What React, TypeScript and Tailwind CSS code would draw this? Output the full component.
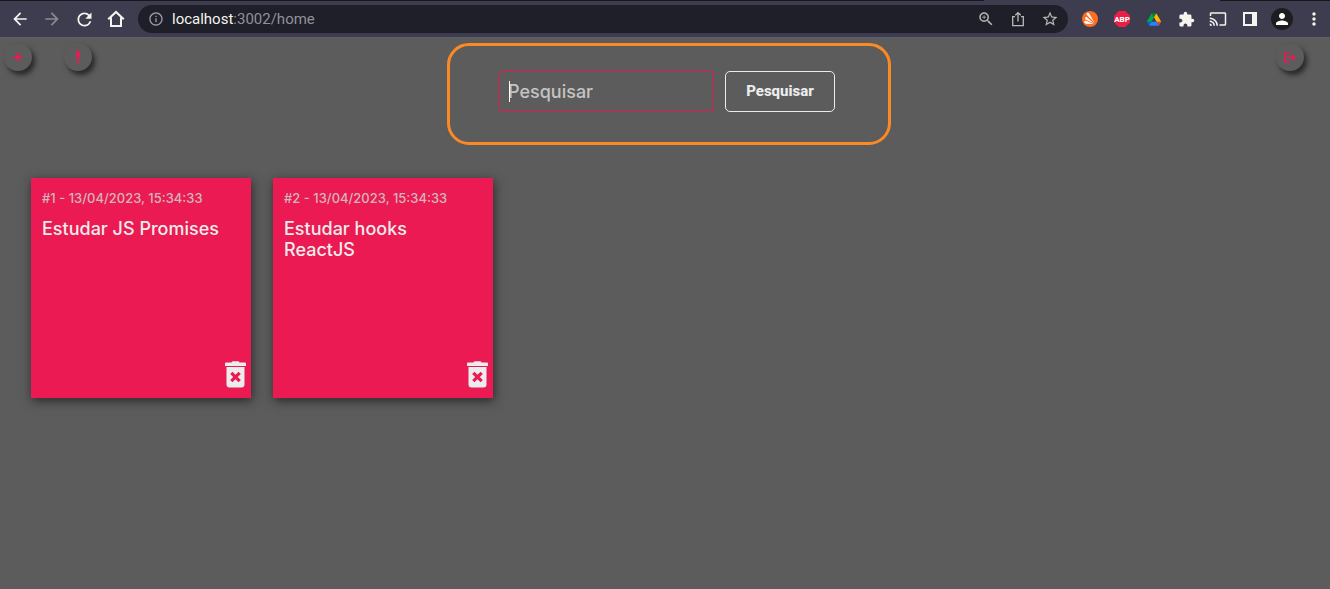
import type { ReactNode } from "react";
import { MdArrowBack, MdArrowForward, MdRefresh, MdInfoOutline, MdZoomIn, MdStarBorder, MdExtension, MdCast, MdPerson, MdMoreVert } from "react-icons/md";

function HomeIcon() {
  return (
    <svg width="18" height="18" viewBox="0 0 18 18" fill="none" stroke="currentColor" strokeWidth="2">
      <path d="M1.2 9.3 9 1.9l7.8 7.4M4 7.5V16h10V7.5" />
    </svg>
  );
}

function ShareIcon() {
  return (
    <svg width="16" height="16" viewBox="0 0 16 16" fill="none" stroke="currentColor" strokeWidth="1.3">
      <path d="M5 5.7H2.7v9h10.600v-9H11M8 10.500V2M5.300 4.300 8 1.600l2.700 2.700" />
    </svg>
  );
}

function AvastIcon() {
  return (
    <svg width="16" height="16" viewBox="0 0 16 16">
      <circle cx="8" cy="8" r="8" fill="#ff6d1f" />
      <path d="M5 2.200c.8-.7 1.900-.3 2.300.6l5.400 9.200-7.700-7.900c-.5-.5-.5-1.400 0-1.900z" fill="#fff" />
      <path d="M3.200 6.600c.5-.7 1.400-.7 2-.2l6.600 6-7.800-3.700c-.9-.4-1.200-1.400-.8-2.100z" fill="#fff" />
      <path d="M2.200 10.800c.2-.9 1.100-1.200 1.900-1l7.200 3.300-7.300-.4c-1 0-1.900-.9-1.800-1.900z" fill="#fff" />
    </svg>
  );
}

function AbpIcon() {
  return (
    <svg width="16" height="16" viewBox="0 0 16 16">
      <path d="M4.700 0h6.600L16 4.700v6.600L11.300 16H4.700L0 11.300V4.700z" fill="#ed1e45" />
      <text x="8" y="10.800" textAnchor="middle" fontSize="8" fontWeight="800" fill="#fff" fontFamily="Roboto, sans-serif">ABP</text>
    </svg>
  );
}

function DriveIcon() {
  return (
    <svg width="14" height="13" viewBox="0 0 87.300 78">
      <path d="m6.600 66.850 3.850 6.650c.8 1.400 1.950 2.500 3.300 3.300l13.750-23.800h-27.500c0 1.550.4 3.100 1.200 4.500z" fill="#0066da" />
      <path d="m43.650 25-13.750-23.800c-1.350.8-2.500 1.900-3.300 3.300l-25.400 44a9.060 9.060 0 0 0-1.200 4.500h27.500z" fill="#00ac47" />
      <path d="m73.550 76.800c1.350-.8 2.500-1.900 3.300-3.300l1.600-2.750 7.650-13.250c.8-1.400 1.200-2.950 1.200-4.500h-27.500l5.850 11.500z" fill="#ea4335" />
      <path d="m43.650 25 13.750-23.800c-1.350-.8-2.900-1.200-4.500-1.200h-18.500c-1.600 0-3.150.45-4.500 1.200z" fill="#00832d" />
      <path d="m59.800 53h-32.300l-13.750 23.800c1.350.8 2.900 1.200 4.500 1.200h50.800c1.600 0 3.150-.45 4.500-1.200z" fill="#2684fc" />
      <path d="m73.400 26.500-12.700-22c-.8-1.400-1.950-2.500-3.300-3.300l-13.750 23.800 16.150 28h27.450c0-1.550-.4-3.100-1.200-4.500z" fill="#ffba00" />
    </svg>
  );
}

function SidePanelIcon() {
  return (
    <svg width="14" height="14" viewBox="0 0 14 14" fill="currentColor">
      <path fillRule="evenodd" d="M0 0h14v14H0zM2 2v10h7V2z" />
    </svg>
  );
}

function LogoutIcon() {
  return (
    <svg width="12" height="11" viewBox="0 0 12 11" fill="none" stroke="currentColor" strokeWidth="1.500">
      <path d="M5.500 1H1v9h4.500M3.500 5.500h7.200M8 2.800l2.700 2.700L8 8.200" />
    </svg>
  );
}

function TrashIcon() {
  return (
    <svg width="21" height="27" viewBox="0 0 21 27" fill="#ececec">
      <path d="M1 1.500h5.500Q7 .3 8 .3h5q1 0 1.500 1.200H20q1 0 1 1V5H0V2.500q0-1 1-1zM1.500 6h18v17.500q0 3-3 3h-12q-3 0-3-3z" />
      <path d="m6.300 11.800 8.400 8.400m0-8.400-8.400 8.400" stroke="#eb1a52" strokeWidth="3.200" />
    </svg>
  );
}

function ToolButton({ label, children, className = "" }: { label: string; children: ReactNode; className?: string }) {
  return (
    <button type="button" aria-label={label} className={`flex size-8 shrink-0 items-center justify-center ${className}`}>
      {children}
    </button>
  );
}

function BrowserBar() {
  return (
    <header className="bg-[#3e3d4f]">
      <div className="flex h-px justify-between">
        <div className="w-[74%] bg-[#17171d]" />
        <div className="w-[110px] bg-[#17171d]" />
      </div>
      <div className="flex h-[37px] items-center border-b border-[#5f5e70] pl-1 text-[#f5f4ee]">
        <ToolButton label="Voltar"><MdArrowBack size={20} /></ToolButton>
        <ToolButton label="Avançar" className="text-[#8b8a93]"><MdArrowForward size={20} /></ToolButton>
        <ToolButton label="Recarregar"><MdRefresh size={21} /></ToolButton>
        <ToolButton label="Início"><HomeIcon /></ToolButton>
        <div className="mx-1.5 flex h-7 grow items-center rounded-full bg-[#1f1f29] text-[#b9b9b9]">
          <MdInfoOutline size={16} className="ml-2.5 text-[#9a9ba3]" />
          <p className="ml-2 grow font-['Roboto',sans-serif] text-[15px] leading-5 text-[#919197]">
            <span className="text-[#f5f4ee]">localhost</span>:3002/home
          </p>
          <ToolButton label="Zoom"><MdZoomIn size={18} /></ToolButton>
          <ToolButton label="Compartilhar"><ShareIcon /></ToolButton>
          <ToolButton label="Favoritar" className="mr-0.5"><MdStarBorder size={18} /></ToolButton>
        </div>
        <ToolButton label="Avast"><AvastIcon /></ToolButton>
        <ToolButton label="Adblock Plus"><AbpIcon /></ToolButton>
        <ToolButton label="Google Drive"><DriveIcon /></ToolButton>
        <ToolButton label="Extensões"><MdExtension size={17} /></ToolButton>
        <ToolButton label="Transmitir"><MdCast size={18} /></ToolButton>
        <ToolButton label="Painel lateral"><SidePanelIcon /></ToolButton>
        <ToolButton label="Perfil">
          <span className="flex size-[22px] items-center justify-center rounded-full bg-[#1d1d20] text-white"><MdPerson size={18} /></span>
        </ToolButton>
        <ToolButton label="Menu"><MdMoreVert size={20} /></ToolButton>
      </div>
    </header>
  );
}

function RoundButton({ label, children }: { label: string; children: ReactNode }) {
  return (
    <button
      type="button"
      aria-label={label}
      className="flex size-7 items-center justify-center rounded-full bg-[#5c5c5c] text-[#eb1a52] shadow-[3px_4px_5px_#292929]"
    >
      {children}
    </button>
  );
}

function SearchForm() {
  return (
    <form
      onSubmit={(e) => e.preventDefault()}
      className="ml-1 flex gap-[11px] rounded-[22px] border-[3px] border-[#fc8a24] pt-[25px] pr-[53px] pb-[30px] pl-[49px]"
    >
      <div className="relative">
        <input
          aria-label="Pesquisar"
          placeholder="Pesquisar"
          className="block h-[41px] w-[215px] rounded-[3px] border border-[#dc1f50] bg-transparent px-2 text-lg font-medium text-[#ececec] outline-none placeholder:text-[#c4c4c4]"
        />
        <span className="absolute top-2.5 left-2.5 h-[21px] w-px bg-white" />
      </div>
      <button type="submit" className="h-[41px] w-[110px] rounded-[5px] border border-[#ececec] font-['Roboto',sans-serif] text-[15px] font-extrabold text-[#ececec]">
        Pesquisar
      </button>
    </form>
  );
}

const notes = [
  { id: 1, date: "13/04/2023, 15:34:33", text: "Estudar JS Promises" },
  { id: 2, date: "13/04/2023, 15:34:33", text: "Estudar hooks ReactJS" },
];

function NoteCard({ id, date, text }: { id: number; date: string; text: string }) {
  return (
    <article className="flex size-[220px] flex-col bg-[#eb1a52] pt-2.5 pr-[5px] pb-2.5 pl-[11px] shadow-[1px_3px_10px_#292929]">
      <p className="text-[13px] leading-5 font-medium text-[#d3b6bd]">#{id} - {date}</p>
      <h2 className="mt-2.5 pr-4 text-lg leading-[21px] font-medium text-[#ececec]">{text}</h2>
      <button type="button" aria-label="Excluir" className="mt-auto self-end"><TrashIcon /></button>
    </article>
  );
}

export default function App() {
  return (
    <div className="flex min-h-screen flex-col bg-[#5c5c5c] font-['Inter',sans-serif]">
      <BrowserBar />
      <main className="grow">
        <div className="grid grid-cols-[1fr_auto_1fr] items-start pt-[5px] pl-1">
          <div className="flex gap-8">
            <RoundButton label="Adicionar">
              <svg width="10" height="10" viewBox="0 0 10 10" stroke="currentColor" strokeWidth="2"><path d="M5 .7v8.600M.7 5h8.600" /></svg>
            </RoundButton>
            <RoundButton label="Prioridade">
              <svg width="4" height="12" viewBox="0 0 4 12" fill="currentColor"><path d="M0 0h4l-.6 8H.6zM.5 9.500h3V12h-3z" /></svg>
            </RoundButton>
          </div>
          <SearchForm />
          <div className="flex justify-end pr-[26px]">
            <RoundButton label="Sair"><LogoutIcon /></RoundButton>
          </div>
        </div>
        <section className="flex flex-wrap gap-[22px] px-[31px] py-[33px]">
          {notes.map((note) => <NoteCard key={note.id} {...note} />)}
        </section>
      </main>
    </div>
  );
}
